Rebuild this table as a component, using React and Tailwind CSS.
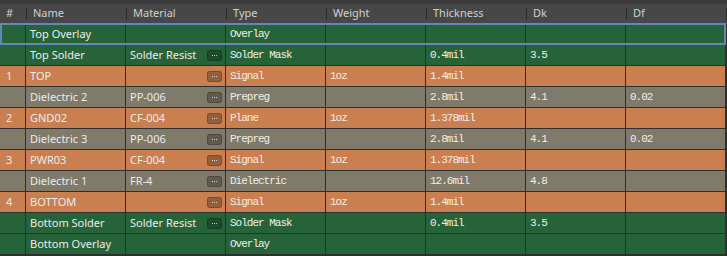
import React from "react";

const layers = [
  { num: "", name: "Top Overlay", mat: "", type: "Overlay", weight: "", thick: "", dk: "", df: "", kind: "mask", btn: false, sel: true },
  { num: "", name: "Top Solder", mat: "Solder Resist", type: "Solder Mask", weight: "", thick: "0.4mil", dk: "3.5", df: "", kind: "mask", btn: true },
  { num: "1", name: "TOP", mat: "", type: "Signal", weight: "1oz", thick: "1.4mil", dk: "", df: "", kind: "cu", btn: true },
  { num: "", name: "Dielectric 2", mat: "PP-006", type: "Prepreg", weight: "", thick: "2.8mil", dk: "4.1", df: "0.02", kind: "diel", btn: true },
  { num: "2", name: "GND02", mat: "CF-004", type: "Plane", weight: "1oz", thick: "1.378mil", dk: "", df: "", kind: "cu", btn: true },
  { num: "", name: "Dielectric 3", mat: "PP-006", type: "Prepreg", weight: "", thick: "2.8mil", dk: "4.1", df: "0.02", kind: "diel", btn: true },
  { num: "3", name: "PWR03", mat: "CF-004", type: "Signal", weight: "1oz", thick: "1.378mil", dk: "", df: "", kind: "cu", btn: true },
  { num: "", name: "Dielectric 1", mat: "FR-4", type: "Dielectric", weight: "", thick: "12.6mil", dk: "4.8", df: "", kind: "diel", btn: true },
  { num: "4", name: "BOTTOM", mat: "", type: "Signal", weight: "1oz", thick: "1.4mil", dk: "", df: "", kind: "cu", btn: true },
  { num: "", name: "Bottom Solder", mat: "Solder Resist", type: "Solder Mask", weight: "", thick: "0.4mil", dk: "3.5", df: "", kind: "mask", btn: true },
  { num: "", name: "Bottom Overlay", mat: "", type: "Overlay", weight: "", thick: "", dk: "", df: "", kind: "mask", btn: false },
];

const rowBg = {
  mask: "bg-[#276338]",
  cu: "bg-[#c97f4f]",
  diel: "bg-[#7f7a69]",
};

const sans = "font-['Noto_Sans',sans-serif] text-[11px]";
const mono = "font-['Liberation_Mono',monospace] text-[11px] tracking-[-1px] text-[#f3eee4]";

function Dots() {
  return (
    <span className="ml-auto mr-[3px] flex h-[11px] w-[15px] items-center justify-center gap-[1px] rounded-[3px] border border-black/20 bg-black/25">
      <span className="h-[1px] w-[1px] bg-white/70" />
      <span className="h-[1px] w-[1px] bg-white/70" />
      <span className="h-[1px] w-[1px] bg-white/70" />
    </span>
  );
}

function Cell({ w, children, className = "" }) {
  return (
    <div className={`flex h-full shrink-0 items-center border-r border-[#2e2e2e] pl-[4px] ${w} ${className}`}>
      {children}
    </div>
  );
}

export default function App() {
  const heads = ["Name", "Material", "Type", "Weight", "Thickness", "Dk", "Df"];
  return (
    <div className="h-[256px] w-[727px] overflow-hidden bg-[#2f2f2f] text-[#ececec]">
      <div className="h-[4px] bg-[#3b3b3b]" />
      <div className={`flex h-[20px] items-center border-b border-[#2b2b2b] bg-[#474747] text-[#cfcfcf] ${sans}`}>
        <div className="flex h-full w-[26px] shrink-0 items-center pl-[6px]">#</div>
        {heads.map((h) => (
          <div key={h} className="flex h-full w-[100px] shrink-0 items-center">
            <span className="h-[12px] w-px bg-[#2a2a2a]" />
            <span className="pl-[6px]">{h}</span>
          </div>
        ))}
        <span className="h-[12px] w-px bg-[#2a2a2a]" />
      </div>
      {layers.map((l, i) => (
        <div key={i} className={`relative flex h-[21px] w-[726px] border-b border-[#2e2e2e] ${rowBg[l.kind]}`}>
          <Cell w="w-[26px]" className={`${sans} pl-[6px]`}>{l.num}</Cell>
          <Cell w="w-[100px]" className={sans}>{l.name}</Cell>
          <Cell w="w-[100px]" className={sans}>
            {l.mat}
            {l.btn && <Dots />}
          </Cell>
          <Cell w="w-[100px]" className={mono}>{l.type}</Cell>
          <Cell w="w-[100px]" className={mono}>{l.weight}</Cell>
          <Cell w="w-[100px]" className={mono}>{l.thick}</Cell>
          <Cell w="w-[100px]" className={mono}>{l.dk}</Cell>
          <Cell w="w-[100px]" className={mono}>{l.df}</Cell>
          {/* focus frame on the selected layer */}
          {l.sel && (
            <div className="pointer-events-none absolute -bottom-px left-0 -top-px right-0 border-2 border-[#6687b3]" />
          )}
        </div>
      ))}
    </div>
  );
}
